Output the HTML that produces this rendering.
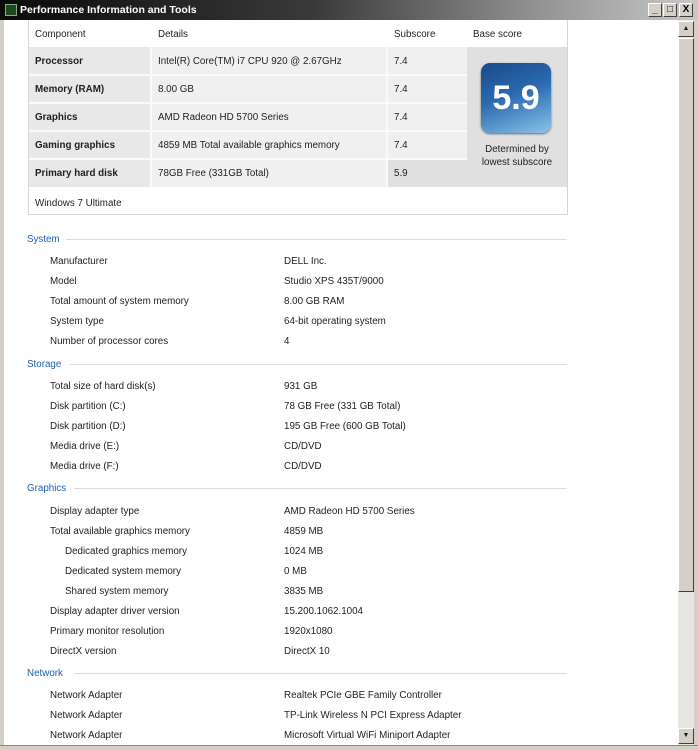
<!DOCTYPE html>
<html><head><style>
*{margin:0;padding:0;box-sizing:border-box}
body{width:698px;height:750px;overflow:hidden;background:#d4d0c8;font-family:"Liberation Sans",sans-serif;font-size:9.8px;color:#1e1e1e;position:relative}
.title{position:absolute;left:0;top:0;width:698px;height:20px;background:linear-gradient(90deg,#0a0a0a 0%,#3a3a3a 45%,#9a9a9a 80%,#c8c8c8 100%);color:#fff;font-weight:bold;font-size:10.5px;line-height:21px;padding-left:20px}
.ico{position:absolute;left:5px;top:4px;width:12px;height:12px;background:#1d4a1d;border:1px solid #8a8;}
.btn{position:absolute;top:3px;width:14px;height:14px;background:#d4d0c8;border:1px solid;border-color:#fff #404040 #404040 #fff;color:#000;font-size:10px;line-height:11px;text-align:center;font-weight:bold}
.content{position:absolute;left:4px;top:20px;width:674px;height:725px;background:#fff;overflow:hidden}
.sb{position:absolute;left:678px;top:20px;width:16px;height:725px;background:#e8e6e2}
.thumb{position:absolute;left:678px;top:38px;width:16px;height:554px;background:#d4d0c8;border:1px solid;border-color:#fff #404040 #404040 #fff}
.arr{position:absolute;left:678px;width:16px;height:16px;background:#d4d0c8;border:1px solid;border-color:#fff #404040 #404040 #fff;font-size:7px;text-align:center;line-height:14px}
.bot{position:absolute;left:0;top:745px;width:698px;height:5px;background:#d4d0c8;border-top:1px solid #888}
.t{position:absolute;border:1px solid #d6d6d6}
.cell{position:absolute;line-height:30px;padding-left:6px}
.s{position:absolute;left:23px;color:#1e5fb0}
.ln{position:absolute;height:1px;background:#dcdcdc}
.r{position:absolute;white-space:nowrap;margin-top:1px}
</style></head><body>
<div class="title"><div class="ico"></div>Performance Information and Tools</div>
<div class="btn" style="left:648px">_</div><div class="btn" style="left:663px">□</div><div class="btn" style="left:679px">X</div>
<div class="content">
<div class="t" style="left:24px;top:-2px;width:540px;height:197px"></div>
<div class="r" style="left:31px;top:8px">Component</div><div class="r" style="left:154px;top:8px">Details</div><div class="r" style="left:390px;top:8px">Subscore</div><div class="r" style="left:469px;top:8px">Base score</div>
<div style="position:absolute;left:25px;top:27px;width:122px;height:140px;background:#e8e8e8"></div>
<div style="position:absolute;left:147px;top:27px;width:236px;height:140px;background:#f0f0f0"></div>
<div style="position:absolute;left:383px;top:27px;width:80px;height:140px;background:#f0f0f0"></div>
<div style="position:absolute;left:383px;top:139px;width:80px;height:28px;background:#e0e0e0"></div>
<div style="position:absolute;left:463px;top:27px;width:100px;height:140px;background:#e0e0e0"></div>
<div style="position:absolute;left:25px;top:54px;width:438px;height:2px;background:#fafafa"></div>
<div style="position:absolute;left:25px;top:82px;width:438px;height:2px;background:#fafafa"></div>
<div style="position:absolute;left:25px;top:110px;width:438px;height:2px;background:#fafafa"></div>
<div style="position:absolute;left:25px;top:138px;width:438px;height:2px;background:#fafafa"></div>
<div style="position:absolute;left:146px;top:27px;width:2px;height:140px;background:#fafafa"></div>
<div style="position:absolute;left:382px;top:27px;width:2px;height:140px;background:#fafafa"></div>
<div class="cell" style="left:25px;top:27px;font-weight:bold">Processor</div>
<div class="cell" style="left:25px;top:55px;font-weight:bold">Memory (RAM)</div>
<div class="cell" style="left:25px;top:83px;font-weight:bold">Graphics</div>
<div class="cell" style="left:25px;top:111px;font-weight:bold">Gaming graphics</div>
<div class="cell" style="left:25px;top:139px;font-weight:bold">Primary hard disk</div>
<div class="cell" style="left:148px;top:27px">Intel(R) Core(TM) i7 CPU 920 @ 2.67GHz</div>
<div class="cell" style="left:148px;top:55px">8.00 GB</div>
<div class="cell" style="left:148px;top:83px">AMD Radeon HD 5700 Series</div>
<div class="cell" style="left:148px;top:111px">4859 MB Total available graphics memory</div>
<div class="cell" style="left:148px;top:139px">78GB Free (331GB Total)</div>
<div class="cell" style="left:384px;top:27px">7.4</div><div class="cell" style="left:384px;top:55px">7.4</div><div class="cell" style="left:384px;top:83px">7.4</div><div class="cell" style="left:384px;top:111px">7.4</div><div class="cell" style="left:384px;top:139px">5.9</div>
<div style="position:absolute;left:477px;top:43px;width:70px;height:70px;border-radius:9px;background:linear-gradient(160deg,#1a4a8a 0%,#2a6ab0 45%,#8ac4e8 100%);color:#fff;font-weight:bold;font-size:34px;text-align:center;line-height:70px;box-shadow:0 1px 2px #666">5.9</div>
<div class="r" style="left:463px;top:122px;width:100px;text-align:center;line-height:13px">Determined by<br>lowest subscore</div>
<div class="r" style="left:31px;top:177px">Windows 7 Ultimate</div>

<div class="s r" style="top:213px">System</div><div class="ln" style="left:62px;top:219px;width:501px"></div>
<div class="r" style="left:46px;top:235px">Manufacturer</div><div class="r" style="left:280px;top:235px">DELL Inc.</div>
<div class="r" style="left:46px;top:255px">Model</div><div class="r" style="left:280px;top:255px">Studio XPS 435T/9000</div>
<div class="r" style="left:46px;top:275px">Total amount of system memory</div><div class="r" style="left:280px;top:275px">8.00 GB RAM</div>
<div class="r" style="left:46px;top:295px">System type</div><div class="r" style="left:280px;top:295px">64-bit operating system</div>
<div class="r" style="left:46px;top:315px">Number of processor cores</div><div class="r" style="left:280px;top:315px">4</div>

<div class="s r" style="top:338px">Storage</div><div class="ln" style="left:66px;top:344px;width:497px"></div>
<div class="r" style="left:46px;top:360px">Total size of hard disk(s)</div><div class="r" style="left:280px;top:360px">931 GB</div>
<div class="r" style="left:46px;top:380px">Disk partition (C:)</div><div class="r" style="left:280px;top:380px">78 GB Free (331 GB Total)</div>
<div class="r" style="left:46px;top:400px">Disk partition (D:)</div><div class="r" style="left:280px;top:400px">195 GB Free (600 GB Total)</div>
<div class="r" style="left:46px;top:420px">Media drive (E:)</div><div class="r" style="left:280px;top:420px">CD/DVD</div>
<div class="r" style="left:46px;top:440px">Media drive (F:)</div><div class="r" style="left:280px;top:440px">CD/DVD</div>

<div class="s r" style="top:462px">Graphics</div><div class="ln" style="left:70px;top:468px;width:493px"></div>
<div class="r" style="left:46px;top:485px">Display adapter type</div><div class="r" style="left:280px;top:485px">AMD Radeon HD 5700 Series</div>
<div class="r" style="left:46px;top:505px">Total available graphics memory</div><div class="r" style="left:280px;top:505px">4859 MB</div>
<div class="r" style="left:61px;top:525px">Dedicated graphics memory</div><div class="r" style="left:280px;top:525px">1024 MB</div>
<div class="r" style="left:61px;top:545px">Dedicated system memory</div><div class="r" style="left:280px;top:545px">0 MB</div>
<div class="r" style="left:61px;top:565px">Shared system memory</div><div class="r" style="left:280px;top:565px">3835 MB</div>
<div class="r" style="left:46px;top:585px">Display adapter driver version</div><div class="r" style="left:280px;top:585px">15.200.1062.1004</div>
<div class="r" style="left:46px;top:605px">Primary monitor resolution</div><div class="r" style="left:280px;top:605px">1920x1080</div>
<div class="r" style="left:46px;top:625px">DirectX version</div><div class="r" style="left:280px;top:625px">DirectX 10</div>

<div class="s r" style="top:647px">Network</div><div class="ln" style="left:70px;top:653px;width:493px"></div>
<div class="r" style="left:46px;top:669px">Network Adapter</div><div class="r" style="left:280px;top:669px">Realtek PCIe GBE Family Controller</div>
<div class="r" style="left:46px;top:689px">Network Adapter</div><div class="r" style="left:280px;top:689px">TP-Link Wireless N PCI Express Adapter</div>
<div class="r" style="left:46px;top:709px">Network Adapter</div><div class="r" style="left:280px;top:709px">Microsoft Virtual WiFi Miniport Adapter</div>
</div>
<div class="sb"></div>
<div class="arr" style="top:21px">▲</div>
<div class="thumb"></div>
<div class="arr" style="top:728px">▼</div>
<div class="bot"></div>
</body></html>
